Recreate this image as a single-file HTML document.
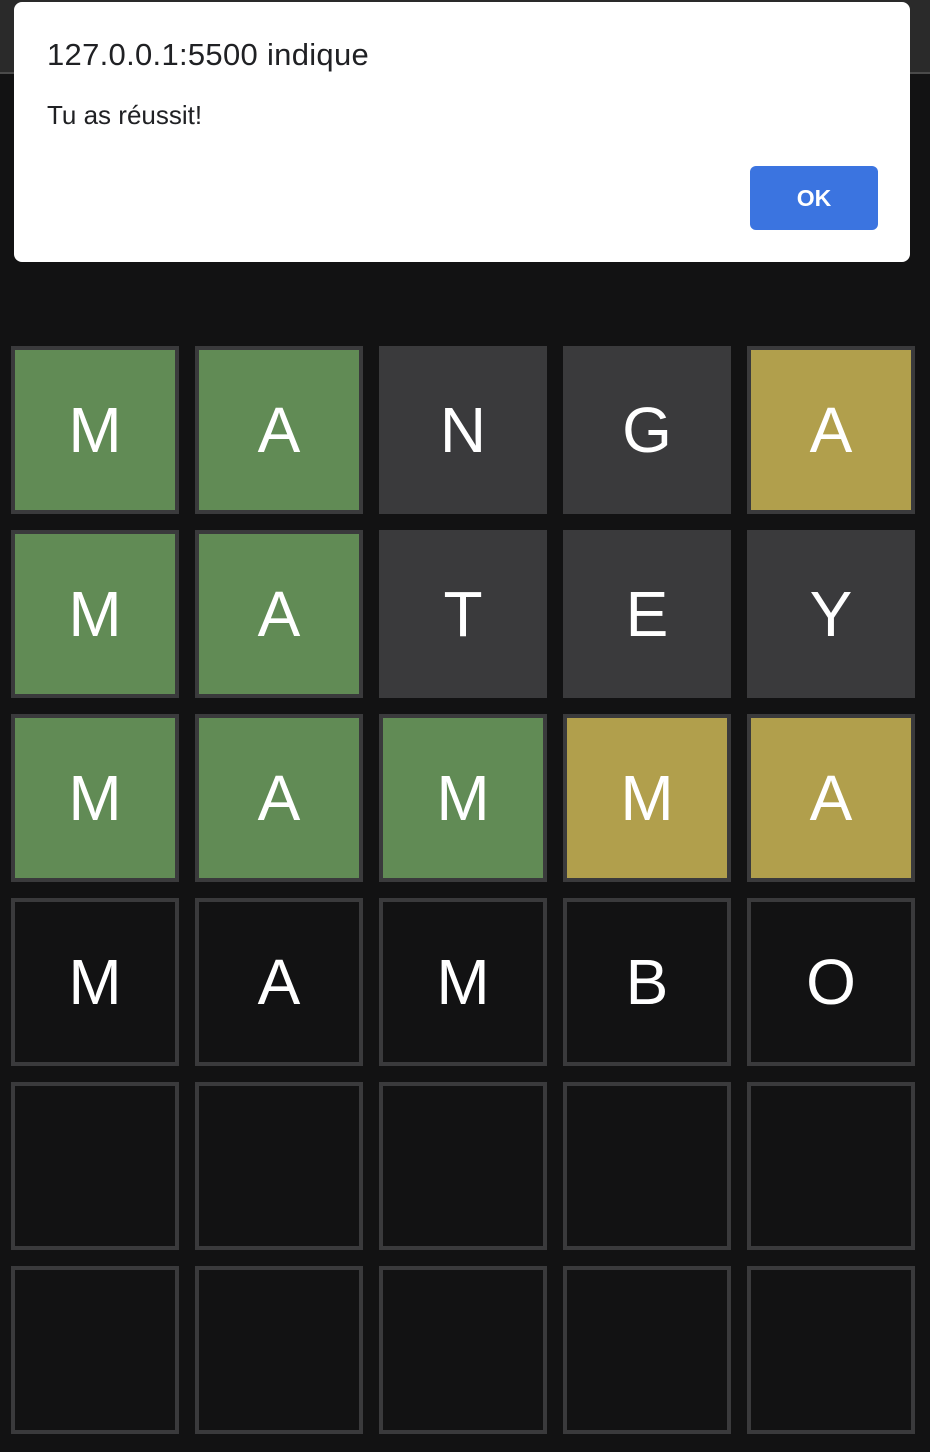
<!DOCTYPE html>
<html><head><meta charset="utf-8"><style>
html,body{margin:0;padding:0;}
body{width:930px;height:1452px;background:#121213;position:relative;overflow:hidden;font-family:"Liberation Sans",sans-serif;}
.bar{position:absolute;left:0;top:0;width:930px;height:72px;background:#2a2a2a;border-bottom:2px solid #4a4a4a;}
.dlg{position:absolute;left:14px;top:2px;width:896px;height:260px;background:#fff;border-radius:8px;}
.t1{position:absolute;left:33px;top:35px;font-size:31px;color:#202124;letter-spacing:0.3px;}
.t2{position:absolute;left:33px;top:98px;font-size:26px;color:#202124;}
.ok{position:absolute;left:736px;top:164px;width:128px;height:64px;background:#3b74e0;border-radius:6px;color:#fff;font-size:23px;font-weight:bold;display:flex;align-items:center;justify-content:center;}
.tile{position:absolute;width:160px;height:160px;border:4px solid #3a3a3c;background:#121213;color:#fff;font-size:64px;display:flex;align-items:center;justify-content:center;}
.g{background:#618b55;}.y{background:#b19f4c;}.x{background:#3a3a3c;}
</style></head><body>
<div class="bar"></div>
<div class="dlg"><div class="t1">127.0.0.1:5500 indique</div><div class="t2">Tu as réussit!</div><div class="ok">OK</div></div>
<div class="tile g" style="left:11px;top:346px">M</div>
<div class="tile g" style="left:195px;top:346px">A</div>
<div class="tile x" style="left:379px;top:346px">N</div>
<div class="tile x" style="left:563px;top:346px">G</div>
<div class="tile y" style="left:747px;top:346px">A</div>
<div class="tile g" style="left:11px;top:530px">M</div>
<div class="tile g" style="left:195px;top:530px">A</div>
<div class="tile x" style="left:379px;top:530px">T</div>
<div class="tile x" style="left:563px;top:530px">E</div>
<div class="tile x" style="left:747px;top:530px">Y</div>
<div class="tile g" style="left:11px;top:714px">M</div>
<div class="tile g" style="left:195px;top:714px">A</div>
<div class="tile g" style="left:379px;top:714px">M</div>
<div class="tile y" style="left:563px;top:714px">M</div>
<div class="tile y" style="left:747px;top:714px">A</div>
<div class="tile" style="left:11px;top:898px">M</div>
<div class="tile" style="left:195px;top:898px">A</div>
<div class="tile" style="left:379px;top:898px">M</div>
<div class="tile" style="left:563px;top:898px">B</div>
<div class="tile" style="left:747px;top:898px">O</div>
<div class="tile" style="left:11px;top:1082px"></div>
<div class="tile" style="left:195px;top:1082px"></div>
<div class="tile" style="left:379px;top:1082px"></div>
<div class="tile" style="left:563px;top:1082px"></div>
<div class="tile" style="left:747px;top:1082px"></div>
<div class="tile" style="left:11px;top:1266px"></div>
<div class="tile" style="left:195px;top:1266px"></div>
<div class="tile" style="left:379px;top:1266px"></div>
<div class="tile" style="left:563px;top:1266px"></div>
<div class="tile" style="left:747px;top:1266px"></div>
</body></html>
